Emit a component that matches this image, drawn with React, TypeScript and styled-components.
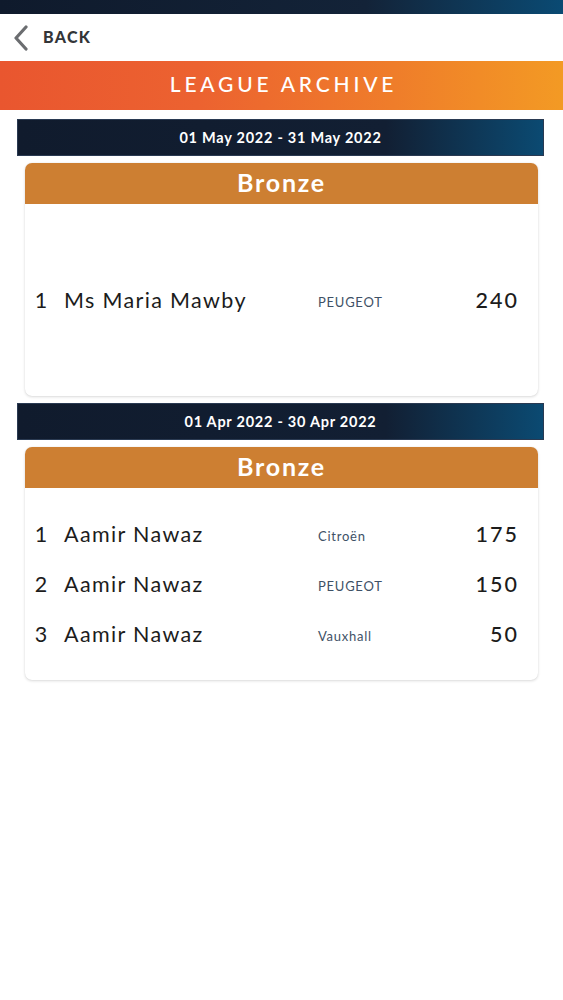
import React from "react";
import styled, { createGlobalStyle } from "styled-components";

const Global = createGlobalStyle`
  html, body { margin: 0; padding: 0; background: #ffffff; }
  body { font-family: "Lato", "Open Sans", sans-serif; }
  * { box-sizing: border-box; }
`;

const Page = styled.div`
  width: 563px;
  min-height: 1000px;
  background: #fff;
  display: flex;
  flex-direction: column;
`;

const StatusBar = styled.div`
  height: 14px;
  background: linear-gradient(90deg, #0f1a2c 0%, #132338 65%, #0a4a73 100%);
`;

const BackRow = styled.div`
  height: 47px;
  display: flex;
  align-items: center;
  padding-left: 12px;
  gap: 13px;
`;

const BackLabel = styled.span`
  font-family: "Lato", sans-serif;
  font-weight: 900;
  font-size: 16px;
  letter-spacing: 1.3px;
  color: #333538;
  margin-top: -2px;
`;

const Banner = styled.div`
  height: 49px;
  background: linear-gradient(90deg, #e9562f 0%, #ec6230 35%, #ef7d2a 70%, #f39a24 100%);
  display: flex;
  align-items: center;
  justify-content: center;
  color: #fff;
  font-family: "Lato", sans-serif;
  font-size: 21px;
  font-weight: 500;
  letter-spacing: 3.8px;
  padding-bottom: 4px;
  padding-left: 4px;
`;

const Content = styled.div`
  display: flex;
  flex-direction: column;
  padding: 9px 19px 0 17px;
  gap: 7px;
`;

const DateBar = styled.div`
  height: 37px;
  background: linear-gradient(90deg, #101b2d 0%, #121f33 70%, #0b4a72 100%);
  border: 1px solid #2a3a52;
  display: flex;
  align-items: center;
  justify-content: center;
  color: #fff;
  font-family: "Lato", sans-serif;
  font-weight: 700;
  font-size: 14.5px;
  letter-spacing: 0.75px;
`;

const Card = styled.div`
  margin: 0 6px 0 8px;
  border-radius: 7px;
  background: #fff;
  box-shadow: 0 1px 3px rgba(0, 0, 0, 0.14), 0 0 1px rgba(0, 0, 0, 0.12);
  overflow: hidden;
`;

const CardHeader = styled.div`
  height: 41px;
  background: #cd7f32;
  display: flex;
  align-items: center;
  justify-content: center;
  color: #fff;
  font-family: "Lato", sans-serif;
  font-weight: 700;
  font-size: 25px;
  letter-spacing: 1.8px;
  padding-bottom: 3px;
`;

const CardBody = styled.div`
  min-height: 192px;
  display: flex;
  flex-direction: column;
  justify-content: center;
  padding: 0 21px 0 8px;
`;

const Row = styled.div`
  height: 50px;
  display: grid;
  grid-template-columns: 31px 254px 1fr auto;
  align-items: center;
  color: #1c1c1c;
`;

const Rank = styled.span`
  width: 16px;
  font-size: 21.5px;
  font-family: "Lato", sans-serif;
  text-align: center;
`;

const Name = styled.span`
  font-size: 21.5px;
  font-family: "Lato", sans-serif;
  letter-spacing: 1.35px;
`;

const Make = styled.span`
  font-size: 13px;
  font-family: "Lato", sans-serif;
  color: #3e5166;
  letter-spacing: 0.75px;
  padding-top: 3px;
`;

const Points = styled.span`
  font-size: 21.5px;
  font-family: "Lato", sans-serif;
  font-weight: 500;
  letter-spacing: 2px;
  margin-right: -2px;
  text-align: right;
`;

type Entry = { rank: number; name: string; make: string; points: number };
type Period = { range: string; tier: string; entries: Entry[] };

const periods: Period[] = [
  {
    range: "01 May 2022 - 31 May 2022",
    tier: "Bronze",
    entries: [{ rank: 1, name: "Ms Maria Mawby", make: "PEUGEOT", points: 240 }],
  },
  {
    range: "01 Apr 2022 - 30 Apr 2022",
    tier: "Bronze",
    entries: [
      { rank: 1, name: "Aamir Nawaz", make: "Citroën", points: 175 },
      { rank: 2, name: "Aamir Nawaz", make: "PEUGEOT", points: 150 },
      { rank: 3, name: "Aamir Nawaz", make: "Vauxhall", points: 50 },
    ],
  },
];

const Chevron = () => (
  <svg width="18" height="26" viewBox="0 0 18 26" fill="none">
    <path d="M14 2 L4 13 L14 24" stroke="#6b6d70" strokeWidth="3.2" strokeLinecap="round" strokeLinejoin="round" />
  </svg>
);

export default function App() {
  return (
    <Page>
      <Global />
      <StatusBar />
      <BackRow>
        <Chevron />
        <BackLabel>BACK</BackLabel>
      </BackRow>
      <Banner>LEAGUE ARCHIVE</Banner>
      <Content>
        {periods.map((p) => (
          <React.Fragment key={p.range}>
            <DateBar>{p.range}</DateBar>
            <Card>
              <CardHeader>{p.tier}</CardHeader>
              <CardBody>
                {p.entries.map((e) => (
                  <Row key={e.rank}>
                    <Rank>{e.rank}</Rank>
                    <Name>{e.name}</Name>
                    <Make>{e.make}</Make>
                    <Points>{e.points}</Points>
                  </Row>
                ))}
              </CardBody>
            </Card>
          </React.Fragment>
        ))}
      </Content>
    </Page>
  );
}
